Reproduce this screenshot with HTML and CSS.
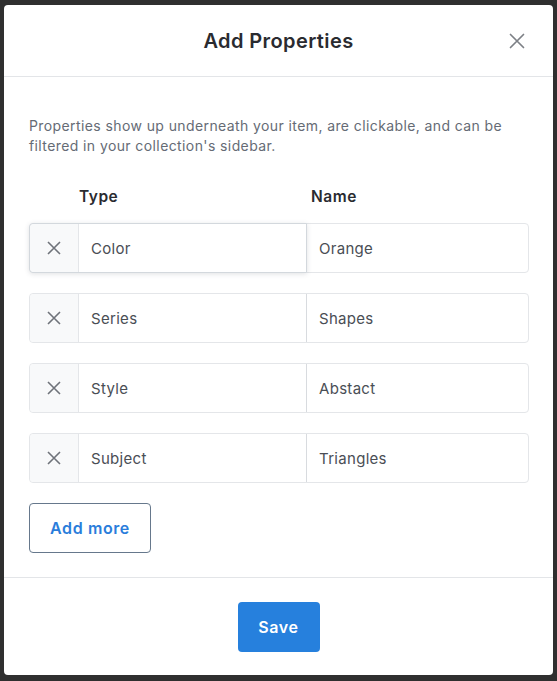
FILE: index.html
```html
<!DOCTYPE html>
<html lang="en">
<head>
<meta charset="utf-8">
<title>Add Properties</title>
<link rel="stylesheet" href="styles.css">
</head>
<body>
<div class="modal">
  <div class="header">
    <h1 class="title">Add Properties</h1>
    <button class="close" aria-label="Close">
      <svg width="16" height="16" viewBox="0 0 16 16"><path d="M1.5 1.5L14.5 14.5M14.5 1.5L1.5 14.5" stroke="#7d8086" stroke-width="1.7" fill="none" stroke-linecap="round"/></svg>
    </button>
  </div>
  <div class="body">
    <p class="desc">Properties show up underneath your item, are clickable, and can be filtered in your collection's sidebar.</p>
    <div class="heads">
      <span class="h-type">Type</span>
      <span class="h-name">Name</span>
    </div>
    <div class="rows">
      <div class="row focused">
        <div class="key">
          <span class="rm"><svg width="14" height="14" viewBox="0 0 14 14"><path d="M1 1L13 13M13 1L1 13" stroke="#6f737a" stroke-width="1.6" fill="none"/></svg></span>
          <span class="type">Color</span>
        </div>
        <span class="val">Orange</span>
      </div>
      <div class="row">
        <div class="key">
          <span class="rm"><svg width="14" height="14" viewBox="0 0 14 14"><path d="M1 1L13 13M13 1L1 13" stroke="#6f737a" stroke-width="1.6" fill="none"/></svg></span>
          <span class="type">Series</span>
        </div>
        <span class="val">Shapes</span>
      </div>
      <div class="row">
        <div class="key">
          <span class="rm"><svg width="14" height="14" viewBox="0 0 14 14"><path d="M1 1L13 13M13 1L1 13" stroke="#6f737a" stroke-width="1.6" fill="none"/></svg></span>
          <span class="type">Style</span>
        </div>
        <span class="val">Abstact</span>
      </div>
      <div class="row">
        <div class="key">
          <span class="rm"><svg width="14" height="14" viewBox="0 0 14 14"><path d="M1 1L13 13M13 1L1 13" stroke="#6f737a" stroke-width="1.6" fill="none"/></svg></span>
          <span class="type">Subject</span>
        </div>
        <span class="val">Triangles</span>
      </div>
    </div>
    <button class="add">Add more</button>
  </div>
  <div class="footer">
    <button class="save">Save</button>
  </div>
</div>
</body>
</html>
```

FILE: styles.css
```css
* { box-sizing: border-box; }
html, body { margin: 0; }
body {
  background: #2f2f2f;
  padding: 5px 4px 6px 4px;
  font-family: "Inter", "Open Sans", sans-serif;
}
.modal {
  width: 549px;
  height: 670px;
  background: #fff;
  border-radius: 4px;
  display: flex;
  flex-direction: column;
}
.header {
  height: 72px;
  border-bottom: 1px solid #e3e5e8;
  display: flex;
  align-items: center;
  justify-content: center;
  position: relative;
}
.title {
  margin: 0;
  font-size: 20px;
  font-weight: 600;
  letter-spacing: 0.4px;
  color: #2a2b30;
  padding-top: 1px;
}
.close {
  position: absolute;
  right: 28px;
  top: 28px;
  width: 16px;
  height: 16px;
  padding: 0;
  border: 0;
  background: none;
  display: flex;
}
.body {
  flex: 1;
  padding: 39px 24px 0 25px;
  border-bottom: 1px solid #e3e5e8;
}
.desc {
  margin: 0;
  font-size: 14px;
  letter-spacing: 0.4px;
  line-height: 20px;
  color: #656b75;
}
.heads {
  display: flex;
  margin-top: 31px;
  height: 20px;
  line-height: 20px;
  font-size: 15.5px;
  letter-spacing: 0.5px;
  font-weight: 600;
  color: #2a2b30;
}
.h-type { margin-left: 50px; width: 232px; }
.rows {
  margin-top: 16px;
  display: flex;
  flex-direction: column;
  gap: 20px;
}
.row {
  height: 50px;
  display: flex;
  border: 1px solid #e4e6e9;
  border-radius: 4px;
  font-size: 15px;
  letter-spacing: 0.3px;
  color: #4a4e55;
}
.key {
  width: 277px;
  display: flex;
  border-right: 1px solid #d8dbdf;
}
.focused .key {
  border: 1px solid #d3d8dd;
  margin: -1px 0 -1px -1px;
  width: 278px;
  border-radius: 4px 0 0 4px;
  box-shadow: 0 1px 5px rgba(60, 70, 80, 0.16);
}
.rm {
  width: 49px;
  background: #f8f9fa;
  border-right: 1px solid #e4e6e9;
  display: flex;
  align-items: center;
  justify-content: center;
  border-radius: 4px 0 0 4px;
}
.type, .val {
  display: flex;
  align-items: center;
  padding-left: 12px;
}
.type { flex: 1; }
.val { flex: 1; }
.add {
  margin-top: 20px;
  width: 122px;
  height: 50px;
  border: 1px solid #66788c;
  border-radius: 4px;
  background: #fff;
  color: #2a7ddb;
  font-family: inherit;
  font-size: 16px;
  letter-spacing: 0.6px;
  font-weight: 600;
  padding: 0;
}
.footer {
  height: 97px;
  display: flex;
  align-items: center;
  justify-content: center;
  padding-top: 1px;
}
.save {
  width: 82px;
  height: 50px;
  background: #2680dd;
  color: #fff;
  border: 0;
  border-radius: 4px;
  font-family: inherit;
  font-size: 16px;
  letter-spacing: 0.6px;
  font-weight: 600;
}
```
